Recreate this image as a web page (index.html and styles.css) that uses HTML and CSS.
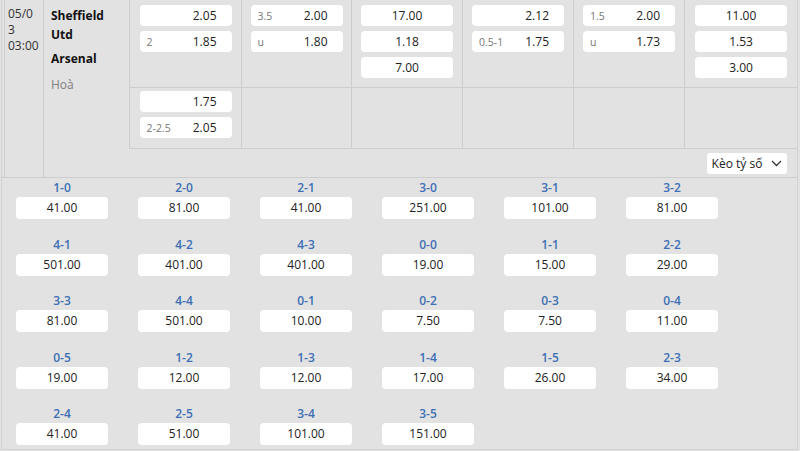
FILE: index.html
```html
<!DOCTYPE html>
<html lang="vi">
<head>
    <meta charset="utf-8">
    <meta name="viewport" content="width=device-width, initial-scale=1.0">
    <title>Sheffield Utd - Arsenal</title>
    <link rel="stylesheet" href="styles.css">
</head>
<body>
    <div class="board">
        <!-- Trận đấu -->
        <div class="match">
            <div class="date">05/03<br>03:00</div>
            <div class="teams">
                <div class="team">Sheffield Utd</div>
                <div class="team second">Arsenal</div>
                <div class="draw">Hoà</div>
            </div>
            <div class="odds">
                <div class="odds-row first">
                    <div class="cell">
                        <div class="odd"><span class="line"></span><span class="val">2.05</span></div>
                        <div class="odd"><span class="line">2</span><span class="val">1.85</span></div>
                    </div>
                    <div class="cell">
                        <div class="odd"><span class="line">3.5</span><span class="val">2.00</span></div>
                        <div class="odd"><span class="line">u</span><span class="val">1.80</span></div>
                    </div>
                    <div class="cell">
                        <div class="odd center">17.00</div>
                        <div class="odd center">1.18</div>
                        <div class="odd center">7.00</div>
                    </div>
                    <div class="cell">
                        <div class="odd"><span class="line"></span><span class="val">2.12</span></div>
                        <div class="odd"><span class="line">0.5-1</span><span class="val">1.75</span></div>
                    </div>
                    <div class="cell">
                        <div class="odd"><span class="line">1.5</span><span class="val">2.00</span></div>
                        <div class="odd"><span class="line">u</span><span class="val">1.73</span></div>
                    </div>
                    <div class="cell">
                        <div class="odd center">11.00</div>
                        <div class="odd center">1.53</div>
                        <div class="odd center">3.00</div>
                    </div>
                </div>
                <div class="odds-row second">
                    <div class="cell">
                        <div class="odd"><span class="line"></span><span class="val">1.75</span></div>
                        <div class="odd"><span class="line">2-2.5</span><span class="val">2.05</span></div>
                    </div>
                    <div class="cell"></div>
                    <div class="cell"></div>
                    <div class="cell"></div>
                    <div class="cell"></div>
                    <div class="cell"></div>
                </div>
                <div class="tools">
                    <button class="select">Kèo tỷ số
                        <svg width="11" height="7" viewBox="0 0 11 7"><path d="M1 1l4.5 4.5L10 1" fill="none" stroke="#333" stroke-width="1.3"/></svg>
                    </button>
                </div>
            </div>
        </div>

        <!-- Tỷ số chính xác -->
        <div class="scores">
            <div class="score"><div class="score-name">1-0</div><div class="score-val">41.00</div></div>
            <div class="score"><div class="score-name">2-0</div><div class="score-val">81.00</div></div>
            <div class="score"><div class="score-name">2-1</div><div class="score-val">41.00</div></div>
            <div class="score"><div class="score-name">3-0</div><div class="score-val">251.00</div></div>
            <div class="score"><div class="score-name">3-1</div><div class="score-val">101.00</div></div>
            <div class="score"><div class="score-name">3-2</div><div class="score-val">81.00</div></div>

            <div class="score"><div class="score-name">4-1</div><div class="score-val">501.00</div></div>
            <div class="score"><div class="score-name">4-2</div><div class="score-val">401.00</div></div>
            <div class="score"><div class="score-name">4-3</div><div class="score-val">401.00</div></div>
            <div class="score"><div class="score-name">0-0</div><div class="score-val">19.00</div></div>
            <div class="score"><div class="score-name">1-1</div><div class="score-val">15.00</div></div>
            <div class="score"><div class="score-name">2-2</div><div class="score-val">29.00</div></div>

            <div class="score"><div class="score-name">3-3</div><div class="score-val">81.00</div></div>
            <div class="score"><div class="score-name">4-4</div><div class="score-val">501.00</div></div>
            <div class="score"><div class="score-name">0-1</div><div class="score-val">10.00</div></div>
            <div class="score"><div class="score-name">0-2</div><div class="score-val">7.50</div></div>
            <div class="score"><div class="score-name">0-3</div><div class="score-val">7.50</div></div>
            <div class="score"><div class="score-name">0-4</div><div class="score-val">11.00</div></div>

            <div class="score"><div class="score-name">0-5</div><div class="score-val">19.00</div></div>
            <div class="score"><div class="score-name">1-2</div><div class="score-val">12.00</div></div>
            <div class="score"><div class="score-name">1-3</div><div class="score-val">12.00</div></div>
            <div class="score"><div class="score-name">1-4</div><div class="score-val">17.00</div></div>
            <div class="score"><div class="score-name">1-5</div><div class="score-val">26.00</div></div>
            <div class="score"><div class="score-name">2-3</div><div class="score-val">34.00</div></div>

            <div class="score"><div class="score-name">2-4</div><div class="score-val">41.00</div></div>
            <div class="score"><div class="score-name">2-5</div><div class="score-val">51.00</div></div>
            <div class="score"><div class="score-name">3-4</div><div class="score-val">101.00</div></div>
            <div class="score"><div class="score-name">3-5</div><div class="score-val">151.00</div></div>
        </div>
    </div>
</body>
</html>
```

FILE: styles.css
```css
body {
    margin: 0;
    padding: 0;
    font-family: 'Open Sans', 'Noto Sans', sans-serif;
    color: #222;
    background-color: #e2e2e2;
}
.board {
    width: 797px;
    margin-left: 1px;
    box-sizing: border-box;
    border-left: 1px solid #d2d2d2;
    border-right: 1px solid #d2d2d2;
    border-bottom: 1px solid #d2d2d2;
}

/* riga partita */
.match {
    display: flex;
    border-bottom: 1px solid #cdcdcd;
}
.date {
    width: 39px;
    margin-left: 2px;
    box-sizing: border-box;
    border-left: 1px solid #cdcdcd;
    padding: 6px 3.8px 0 3px;
    font-size: 12px;
    line-height: 16px;
    color: #333;
    word-break: break-all;
}
.teams {
    width: 86px;
    box-sizing: border-box;
    border-left: 1px solid #cdcdcd;
    padding: 6px 6px 0 7px;
}
.team {
    font-size: 12px;
    font-weight: 700;
    line-height: 19px;
    color: #111;
}
.team.second {
    margin-top: 5px;
}
.draw {
    margin-top: 7px;
    font-size: 12px;
    line-height: 19px;
    color: #808080;
}

.odds {
    flex: 1;
    display: flex;
    flex-direction: column;
}
.odds-row {
    display: grid;
    grid-template-columns: 112px 110px 111px 111px 111px 1fr;
    border-bottom: 1px solid #cdcdcd;
}
.odds-row.first {
    height: 87px;
}
.odds-row.second {
    height: 60px;
}
.cell {
    border-left: 1px solid #cdcdcd;
    display: flex;
    flex-direction: column;
    align-items: center;
    gap: 5px;
}
.odds-row.first .cell {
    padding-top: 5px;
}
.odds-row.second .cell {
    padding-top: 3px;
}
.odd {
    width: 92px;
    height: 21px;
    box-sizing: border-box;
    background: #fff;
    border-radius: 4px;
    display: flex;
    align-items: center;
    justify-content: space-between;
    padding: 0 15px 0 7px;
    font-size: 12px;
}
.odd.center {
    justify-content: center;
    padding: 0;
}
.odd .line {
    font-size: 10.5px;
    color: #777;
}
.odd .val {
    color: #222;
}
.tools {
    height: 28px;
    display: flex;
    justify-content: flex-end;
    align-items: center;
    padding-right: 10px;
}
.select {
    height: 21px;
    width: 80px;
    border: none;
    border-radius: 3px;
    background: #fff;
    font-family: 'Open Sans', 'Noto Sans', sans-serif;
    font-size: 12px;
    color: #222;
    display: flex;
    align-items: center;
    justify-content: center;
    gap: 9px;
    padding: 0;
}

/* risultati esatti */
.scores {
    display: grid;
    grid-template-columns: repeat(6, 92px);
    column-gap: 30px;
    row-gap: 16.5px;
    padding: 1px 0 4px 14px;
}
.score-name {
    text-align: center;
    font-size: 12px;
    font-weight: 600;
    line-height: 18px;
    color: #3d6fb5;
}
.score-val {
    height: 22px;
    background: #fff;
    border-radius: 4px;
    text-align: center;
    font-size: 12px;
    line-height: 22px;
    color: #222;
}
```
